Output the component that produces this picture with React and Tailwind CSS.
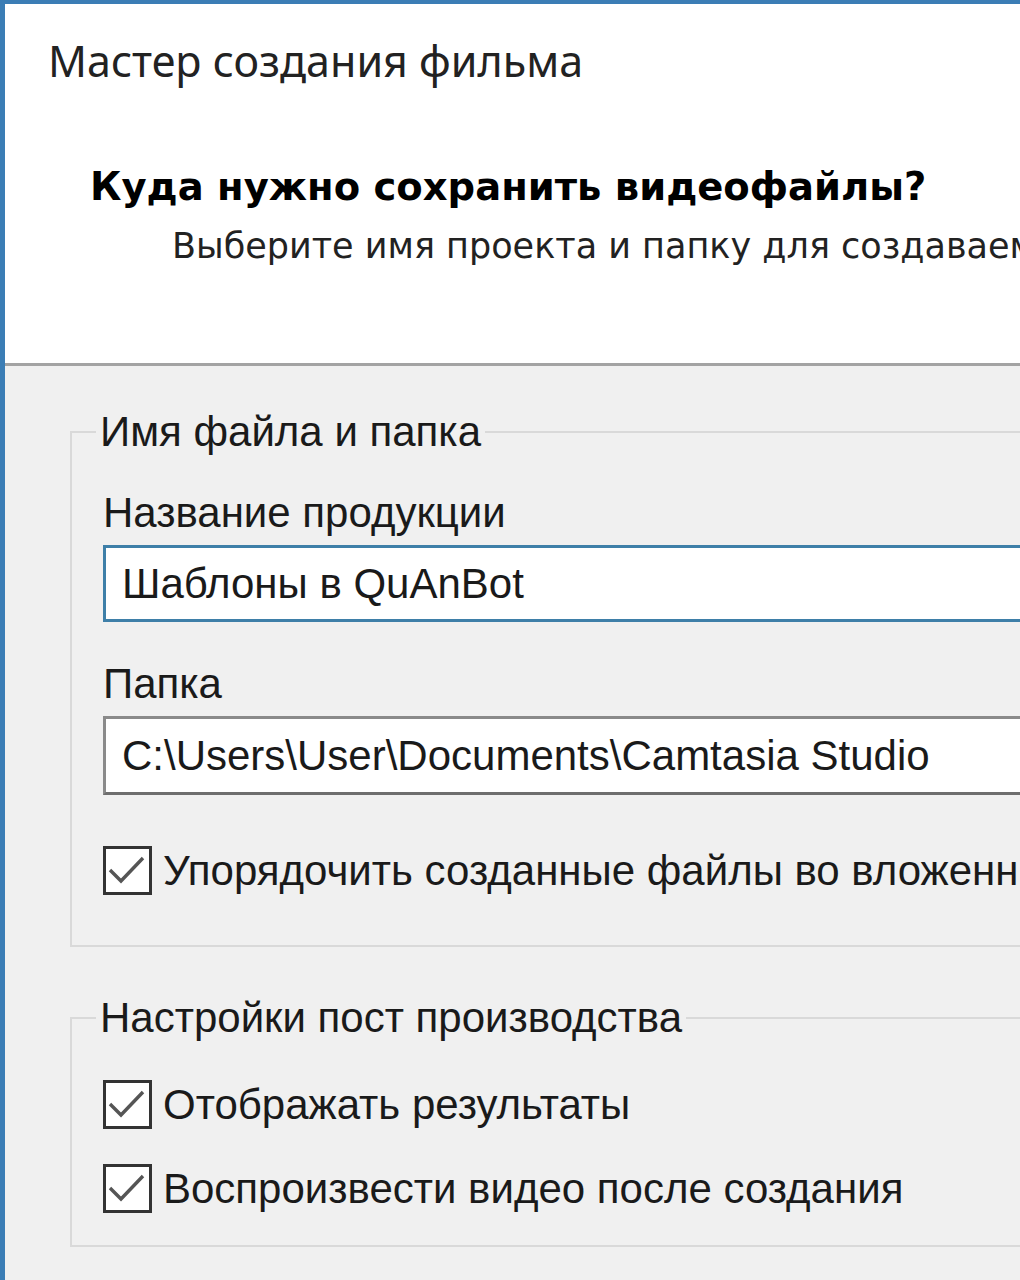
import React from "react";

const Check = () => (
  <span className="flex h-[49px] w-[49px] shrink-0 items-start justify-start border-[3px] border-[#333333] bg-white">
    <svg width="43" height="43" viewBox="0 0 43 43" fill="none">
      <path d="M4 21 L15 32 L37 9" stroke="#555555" strokeWidth="3.4" />
    </svg>
  </span>
);

const CheckRow = ({ label, className = "" }) => (
  <div className={"flex items-center gap-[11px] leading-[48px] " + className}>
    <Check />
    <span className="whitespace-nowrap">{label}</span>
  </div>
);

export default function App() {
  return (
    <div className="h-[1280px] w-[1020px] overflow-hidden border-l-[5px] border-t-[4px] border-[#3b7db5] bg-[#f0f0f0] font-['Liberation_Sans',sans-serif] text-[42px] text-[#1a1a1a]">
      <div className="w-[1500px]">
        {/* header */}
        <div className="h-[362px] border-b-[3px] border-[#a3a3a3] bg-white pl-[43px] pt-[32px]">
          <div className="font-['Noto_Sans',sans-serif] text-[43px] leading-[50px] text-[#222]">
            Мастер создания фильма
          </div>
          <div className="mt-[79px] pl-[42px] font-['DejaVu_Sans',sans-serif] text-[38.5px] font-bold leading-[44px] text-black">
            Куда нужно сохранить видеофайлы?
          </div>
          <div className="mt-[15px] pl-[124px] font-['DejaVu_Sans',sans-serif] text-[35px] leading-[44px] text-[#222]">
            Выберите имя проекта и папку для создаваемых видеофайлов.
          </div>
        </div>

        {/* body */}
        <div className="pl-[65px] pt-[42px]">
          <fieldset className="h-[539px] border-2 border-[#d9d9d9] pl-[24px]">
            <legend className="px-[4px] leading-[48px]">Имя файла и папка</legend>
            <div className="pl-[7px]">
              <div className="mt-[33px] pl-[-1px] leading-[48px]">Название продукции</div>
              <div className="mt-[8px] flex h-[77px] items-center border-[3px] border-[#3e7fa8] bg-white px-[16px]">
                Шаблоны в QuAnBot
              </div>
              <div className="mt-[38px] leading-[48px]">Папка</div>
              <div className="mt-[8px] flex h-[79px] items-center border-[3px] border-[#8a8a8a] border-b-[#6e6e6e] bg-white px-[16px]">
                C:\Users\User\Documents\Camtasia Studio
              </div>
              <CheckRow className="mt-[51px]" label="Упорядочить созданные файлы во вложенные папки" />
            </div>
          </fieldset>

          <fieldset className="mt-[47px] h-[253px] border-2 border-[#d9d9d9] pl-[24px]">
            <legend className="px-[4px] leading-[48px]">Настройки пост производства</legend>
            <div className="pl-[7px]">
              <CheckRow className="mt-[38px]" label="Отображать результаты" />
              <CheckRow className="mt-[35px]" label="Воспроизвести видео после создания" />
            </div>
          </fieldset>
        </div>
      </div>
    </div>
  );
}
